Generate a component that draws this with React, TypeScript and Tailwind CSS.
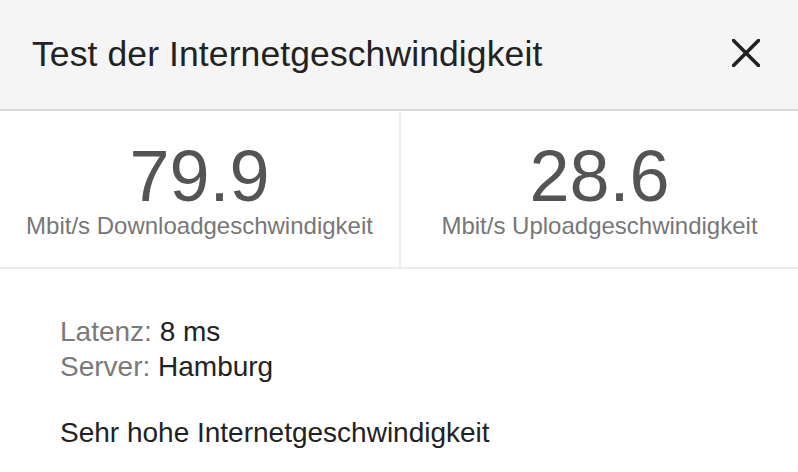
import React from "react";

export default function App() {
  return (
    <div className="w-[798px] h-[472px] bg-white overflow-hidden font-['Liberation_Sans','Arimo',Helvetica,sans-serif]">
      <div className="h-[111px] bg-[#f5f5f5] border-b-2 border-[#d9d9d9] flex items-center justify-between pl-[32px] pr-[38px]">
        <div className="text-[35.5px] text-[#222222] tracking-[0.1px]">Test der Internetgeschwindigkeit</div>
        <svg width="28" height="28" viewBox="0 0 28 28" className="mb-[4px]">
          <path d="M1.5 1.5 L26.5 26.5 M26.5 1.5 L1.5 26.5" stroke="#222222" strokeWidth="3.6" strokeLinecap="square" />
        </svg>
      </div>
      <div className="h-[158px] grid grid-cols-[399px_2px_397px] border-b-2 border-[#ececec]">
        <div className="flex flex-col items-center justify-center">
          <div className="text-[72px] leading-[72px] text-[#545454]">79.9</div>
          <div className="text-[24px] leading-[24px] text-[#777777] mt-[2px]">Mbit/s Downloadgeschwindigkeit</div>
        </div>
        <div className="bg-[#ececec]" />
        <div className="flex flex-col items-center justify-center">
          <div className="text-[72px] leading-[72px] text-[#545454]">28.6</div>
          <div className="text-[24px] leading-[24px] text-[#777777] mt-[2px]">Mbit/s Uploadgeschwindigkeit</div>
        </div>
      </div>
      <div className="pl-[60px] pt-[45px] text-[28px] leading-[35px]">
        <div>
          <span className="text-[#7a7a7a]">Latenz: </span>
          <span className="text-[#222222]">8 ms</span>
        </div>
        <div>
          <span className="text-[#7a7a7a]">Server: </span>
          <span className="text-[#222222]">Hamburg</span>
        </div>
        <div className="mt-[31px] text-[#222222]">Sehr hohe Internetgeschwindigkeit</div>
      </div>
    </div>
  );
}
